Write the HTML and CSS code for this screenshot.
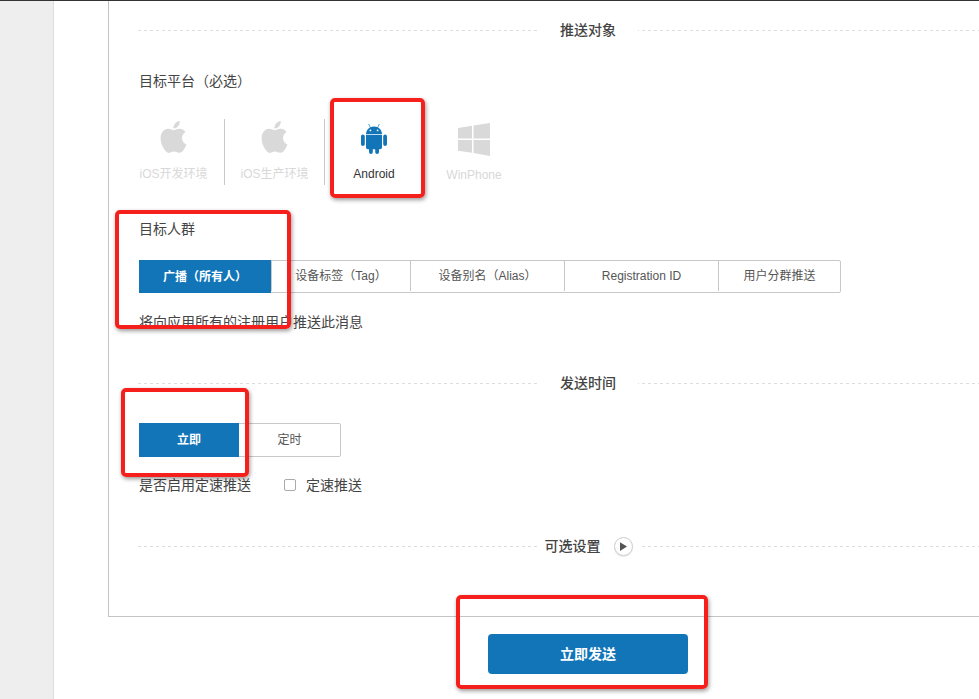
FILE: index.html
```html
<!DOCTYPE html>
<html lang="zh">
<head>
<meta charset="utf-8">
<title>推送</title>
<link rel="stylesheet" href="styles.css">
</head>
<body>
<div class="page">
  <aside class="sidebar"></aside>
  <main class="main">
    <section class="panel">
      <div class="divider first"><span class="divider-text">推送对象</span></div>
      <div class="field-label platform-label">目标平台（必选）</div>
      <div class="platforms">
        <div class="platform sep">
          <svg class="ico-apple" viewBox="3.5 2 17 20"><path d="M18.71 19.5c-.83 1.24-1.71 2.45-3.05 2.47-1.34.03-1.77-.79-3.29-.79-1.53 0-2 .77-3.27.82-1.31.05-2.3-1.32-3.14-2.53C4.25 17 2.94 12.45 4.7 9.39c.87-1.52 2.43-2.48 4.12-2.51 1.28-.02 2.5.87 3.29.87.78 0 2.26-1.07 3.81-.91.65.03 2.47.26 3.64 1.98-.09.06-2.17 1.28-2.15 3.81.03 3.02 2.65 4.03 2.68 4.04-.03.07-.42 1.44-1.38 2.83M13 3.5c.73-.83 1.94-1.46 2.94-1.5.13 1.17-.34 2.35-1.04 3.19-.69.85-1.83 1.51-2.95 1.42-.15-1.15.41-2.35 1.05-3.11z"/></svg>
          <span class="platform-name">iOS开发环境</span>
        </div>
        <div class="platform sep">
          <svg class="ico-apple" viewBox="3.5 2 17 20"><path d="M18.71 19.5c-.83 1.24-1.71 2.45-3.05 2.47-1.34.03-1.77-.79-3.29-.79-1.53 0-2 .77-3.27.82-1.31.05-2.3-1.32-3.14-2.53C4.25 17 2.94 12.45 4.7 9.39c.87-1.52 2.43-2.48 4.12-2.51 1.28-.02 2.5.87 3.29.87.78 0 2.26-1.07 3.81-.91.65.03 2.47.26 3.64 1.98-.09.06-2.17 1.28-2.15 3.81.03 3.02 2.65 4.03 2.68 4.04-.03.07-.42 1.44-1.38 2.83M13 3.5c.73-.83 1.94-1.46 2.94-1.5.13 1.17-.34 2.35-1.04 3.19-.69.85-1.83 1.51-2.95 1.42-.15-1.15.41-2.35 1.05-3.11z"/></svg>
          <span class="platform-name">iOS生产环境</span>
        </div>
        <div class="platform active">
          <svg class="ico-android" viewBox="0 0 26 30">
            <path d="M7.6 0 9.4 3.500M18.4 0 16.6 3.500" class="antenna"/>
            <path d="M5 10.200C5 5.600 8.500 2.400 13 2.400s8 3.200 8 7.800z"/>
            <circle class="eye" cx="9.400" cy="6.400" r=".9"/>
            <circle class="eye" cx="16.600" cy="6.400" r=".9"/>
            <path d="M5 11h16v12.400a1.800 1.800 0 0 1-1.800 1.800H6.800A1.800 1.800 0 0 1 5 23.400z"/>
            <rect x="0" y="10.600" width="3.800" height="11.400" rx="1.900"/>
            <rect x="22.200" y="10.600" width="3.800" height="11.400" rx="1.900"/>
            <rect x="8" y="22" width="3.800" height="8" rx="1.900"/>
            <rect x="14.200" y="22" width="3.800" height="8" rx="1.900"/>
          </svg>
          <span class="platform-name">Android</span>
        </div>
        <div class="platform win">
          <svg class="ico-win" viewBox="0 0 32 33">
            <path d="M0 5 14 2.800V15.500H0zM15.500 2.500 32 0V15.500H15.500zM0 17H14V29.700L0 27.700zM15.500 17H32V33L15.500 30z"/>
          </svg>
          <span class="platform-name">WinPhone</span>
        </div>
      </div>

      <div class="field-label audience-label">目标人群</div>
      <div class="tabs audience-tabs">
        <div class="tab tab-a on">广播（所有人）</div>
        <div class="tab tab-b">设备标签（Tag）</div>
        <div class="tab tab-c">设备别名（Alias）</div>
        <div class="tab tab-c">Registration ID</div>
        <div class="tab tab-d">用户分群推送</div>
      </div>
      <div class="note">将向应用所有的注册用户推送此消息</div>

      <div class="divider time"><span class="divider-text">发送时间</span></div>
      <div class="tabs time-tabs">
        <div class="tab tab-e on">立即</div>
        <div class="tab tab-e">定时</div>
      </div>
      <div class="rate-row">
        <span class="rate-label">是否启用定速推送</span>
        <label class="rate-check"><span class="checkbox"></span>定速推送</label>
      </div>

      <div class="divider optional">
        <span class="divider-text">可选设置
          <span class="play"><svg viewBox="0 0 8 10"><path d="M0 0 8 5 0 10z"/></svg></span>
        </span>
      </div>
    </section>
    <div class="actions"><button class="send" type="button">立即发送</button></div>
  </main>
</div>
<div class="mark mark-android"></div>
<div class="mark mark-audience"></div>
<div class="mark mark-time"></div>
<div class="mark mark-send"></div>
</body>
</html>
```

FILE: styles.css
```css
* { box-sizing: border-box; }
html, body { margin: 0; height: 100%; overflow: hidden; background: #fff; }
body {
  font-family: "Liberation Sans", "Noto Sans CJK SC", sans-serif;
  font-size: 14px;
  line-height: 20px;
  color: #444;
  position: relative;
}
.page {
  display: flex;
  height: 699px;
  border-top: 1px solid #333;
}
.sidebar {
  flex: 0 0 54px;
  background: #eee;
  border-right: 1px solid #ddd;
}
.main { flex: 1; min-width: 0; padding-left: 54px; }
.panel {
  height: 616px;
  padding: 19px 0 0 29px;
  border-left: 1px solid #c4c4c4;
  border-bottom: 1px solid #c4c4c4;
}
.divider {
  width: 900px;
  height: 20px;
  display: flex;
  justify-content: center;
  background-image: repeating-linear-gradient(90deg, #ddd 0 3px, transparent 3px 6px);
  background-repeat: no-repeat;
  background-size: 100% 1px;
  background-position: 0 10px;
}
.divider-text {
  display: flex;
  align-items: center;
  padding: 0 22px;
  background: #fff;
  font-weight: 500;
  color: #444;
}
.divider.time { margin-top: 41px; }
.divider.optional { margin-top: 41px; }
.divider.optional .divider-text { padding: 0 7px 0 8px; }
.play {
  width: 19px;
  height: 19px;
  margin-left: 13px;
  border: 1px solid #ccc;
  border-radius: 50%;
  display: flex;
  align-items: center;
  justify-content: center;
  box-shadow: 0 1px 1px #e4e4e4;
}
.play svg { width: 7px; height: 9px; margin-left: 1px; fill: #555; }
.field-label { padding-left: 1px; }
.platform-label { margin-top: 31px; }
.platforms {
  display: flex;
  height: 66px;
  margin: 28px 0 0 -14px;
}
.platform {
  flex: 0 0 100px;
  display: flex;
  flex-direction: column;
  align-items: center;
  color: #d8d8d8;
  font-size: 12px;
  line-height: 16px;
}
.platform:first-child { flex-basis: 101px; padding-right: 1px; }
.sep { border-right: 1px solid #c8c8c8; }
.platform svg { fill: #d9d9d9; display: block; }
.ico-apple { width: 27px; height: 32px; margin: 2px 0 13px; }
.ico-android { width: 26px; height: 30px; margin: 5px 0 12px; overflow: visible; }
.platform.active { color: #333; margin-left: -1px; }
.platform.active svg { fill: #1175b8; }
.antenna { stroke: #1175b8; stroke-width: .7; fill: none; }
.platform.active .eye { fill: #fff; }
.ico-win { width: 32px; height: 33px; margin: 4px 0 11px; }
.audience-label { margin-top: 34px; }
.tabs {
  display: flex;
  margin-left: 1px;
  border: 1px solid #c8c8c8;
  border-radius: 2px;
  font-size: 12px;
  color: #555;
}
.tab {
  display: flex;
  align-items: center;
  justify-content: center;
  border-left: 1px solid #c8c8c8;
}
.tab:first-child { border-left: 0; }
.tab.on {
  margin: -1px 0 -1px -1px;
  background: #1175b8;
  color: #fff;
  font-weight: 700;
}
.audience-tabs { width: 702px; height: 33px; margin-top: 21px; line-height: 18px; padding-bottom: 1px; }
.tab-a { flex: 0 0 132px; }
.tab-a.on { margin-bottom: -2px; }
.tab-b { flex: 0 0 139px; }
.tab-c { flex: 0 0 154px; }
.tab-d { flex: 1; }
.time-tabs { width: 202px; height: 34px; margin-top: 30px; }
.tab-e { flex: 1; }
.tab-e.on { flex: 0 0 100px; }
.tab-e.on + .tab-e { border-left: 0; }
.note { margin-top: 19px; padding-left: 1px; }
.rate-row { display: flex; margin-top: 18px; padding-left: 1px; }
.rate-label { width: 145px; }
.rate-check { display: flex; align-items: center; }
.checkbox {
  width: 12px;
  height: 12px;
  margin-right: 10px;
  border: 1px solid #aaa;
  border-radius: 2px;
  background: #fff;
}
.actions { padding: 17px 0 0 380px; }
.send {
  display: block;
  width: 200px;
  height: 40px;
  padding: 0 0 2px;
  border: 0;
  border-radius: 4px;
  background: #1175b8;
  color: #fff;
  font: 700 14px "Liberation Sans", "Noto Sans CJK SC", sans-serif;
}
.mark {
  position: absolute;
  border: 4px solid #f5201c;
  border-radius: 5px;
  box-shadow: 1px 2px 4px rgba(0,0,0,.4);
  pointer-events: none;
}
.mark-android { left: 330px; top: 98px; width: 95px; height: 100px; }
.mark-audience { left: 115px; top: 210px; width: 176px; height: 119px; }
.mark-time { left: 121px; top: 388px; width: 128px; height: 89px; }
.mark-send { left: 456px; top: 595px; width: 252px; height: 94px; }
```
